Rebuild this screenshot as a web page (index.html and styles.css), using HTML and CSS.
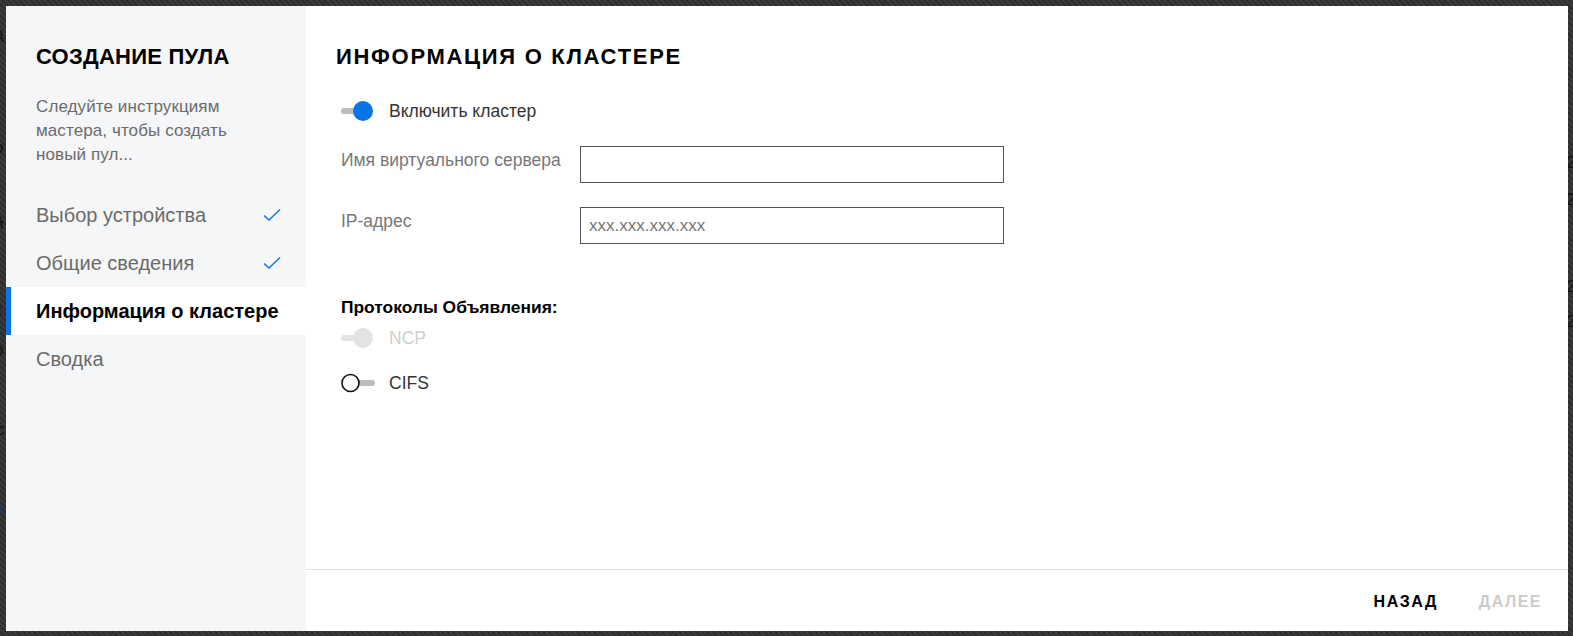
FILE: index.html
```html
<!DOCTYPE html>
<html lang="ru">
<head>
<meta charset="utf-8">
<title>Создание пула</title>
<link rel="stylesheet" href="styles.css">
</head>
<body>
<div class="backdrop">
  <span class="bgtxt" style="left:-6px;top:24px">ц</span>
  <span class="bgtxt" style="left:-6px;top:138px">о</span>
  <span class="bgtxt" style="left:-6px;top:214px">й</span>
  <span class="bgtxt" style="left:-6px;top:300px">к</span>
  <span class="bgtxt" style="left:-6px;top:340px">р</span>
  <span class="bgtxt" style="left:-4px;top:420px">с</span>
  <span class="bgtxt link" style="left:-4px;top:498px">с</span>
  <span class="bgtxt" style="left:1566px;top:153px">2</span>
  <span class="bgtxt" style="left:1566px;top:190px">2</span>
  <span class="bgtxt" style="left:1566px;top:277px">2</span>
  <span class="bgtxt" style="left:1566px;top:312px">2</span>
</div>

<div class="dialog">
  <aside class="sidebar">
    <h1 class="side-title">СОЗДАНИЕ ПУЛА</h1>
    <p class="side-desc">Следуйте инструкциям<br>мастера, чтобы создать<br>новый пул...</p>
    <ul class="steps">
      <li class="step done">
        <span>Выбор устройства</span>
        <svg class="check" width="18" height="14" viewBox="0 0 18 14"><path d="M1 7.5 L6 12 L17 1.5" fill="none" stroke="#1a73e8" stroke-width="1.6"/></svg>
      </li>
      <li class="step done">
        <span>Общие сведения</span>
        <svg class="check" width="18" height="14" viewBox="0 0 18 14"><path d="M1 7.5 L6 12 L17 1.5" fill="none" stroke="#1a73e8" stroke-width="1.6"/></svg>
      </li>
      <li class="step active"><span>Информация о кластере</span></li>
      <li class="step"><span>Сводка</span></li>
    </ul>
  </aside>

  <section class="main">
    <div class="content">
      <h2 class="main-title">ИНФОРМАЦИЯ О КЛАСТЕРЕ</h2>
      <div class="form">
        <div class="toggle-row top">
          <svg class="toggle" width="36" height="24" viewBox="0 0 36 24"><rect x="0" y="9" width="28" height="6" rx="3" fill="#bdbdbd"/><circle cx="22" cy="12" r="10" fill="#0a73e8"/></svg>
          <span class="toggle-label">Включить кластер</span>
        </div>

        <div class="field first">
          <span class="field-label">Имя виртуального сервера</span>
          <input class="field-input" type="text">
        </div>
        <div class="field">
          <span class="field-label">IP-адрес</span>
          <input class="field-input" type="text" placeholder="xxx.xxx.xxx.xxx">
        </div>

        <div class="protocols-title">Протоколы Объявления:</div>
        <div class="toggle-row ncp">
          <svg class="toggle" width="36" height="24" viewBox="0 0 36 24"><rect x="0" y="9" width="28" height="6" rx="3" fill="#e3e3e3"/><circle cx="22" cy="12" r="10" fill="#e3e3e3"/></svg>
          <span class="toggle-label disabled">NCP</span>
        </div>
        <div class="toggle-row cifs">
          <svg class="toggle" width="36" height="24" viewBox="0 0 36 24"><rect x="8" y="9" width="26" height="6" rx="3" fill="#bdbdbd"/><circle cx="9.5" cy="12" r="8.5" fill="#fff" stroke="#111" stroke-width="1.6"/></svg>
          <span class="toggle-label">CIFS</span>
        </div>
      </div>
    </div>
    <footer class="footer">
      <button class="btn">НАЗАД</button>
      <button class="btn disabled">ДАЛЕЕ</button>
    </footer>
  </section>
</div>
</body>
</html>
```

FILE: styles.css
```css
* { box-sizing: border-box; }

html, body {
  margin: 0;
  padding: 0;
  width: 1573px;
  height: 636px;
  overflow: hidden;
}

body {
  font-family: "Liberation Sans", Arial, sans-serif;
  background-color: #353535;
  background-image: repeating-linear-gradient(45deg, #3b3b3b 0 2px, #2e2e2e 2px 4px);
  position: relative;
}

.backdrop {
  position: absolute;
  inset: 0;
}

.bgtxt {
  position: absolute;
  font-size: 17px;
  line-height: 20px;
  color: #111;
}
.bgtxt.link { color: #0b3d7a; }

.dialog {
  position: absolute;
  left: 6px;
  top: 6px;
  width: 1562px;
  height: 625px;
  display: flex;
  background: #fff;
}

/* Sidebar */
.sidebar {
  width: 300px;
  flex: none;
  background: #f5f6f8;
  padding-top: 38px;
}

.side-title {
  margin: 0;
  padding: 0 30px;
  font-size: 22px;
  line-height: 26px;
  font-weight: 700;
  letter-spacing: 0.25px;
  color: #000;
}

.side-desc {
  margin: 25px 0 0;
  padding: 0 30px;
  font-size: 17px;
  line-height: 24px;
  letter-spacing: 0.1px;
  color: #6b6b6b;
}

.steps {
  list-style: none;
  margin: 24px 0 0;
  padding: 0;
}

.step {
  height: 48px;
  display: flex;
  align-items: center;
  justify-content: space-between;
  padding: 0 25px 0 30px;
  font-size: 20px;
  color: #6b6b6b;
}

.step .check { flex: none; margin-top: -1px; }

.step.active {
  background: #fff;
  color: #000;
  font-weight: 700;
  box-shadow: inset 5px 0 0 #0a73e8;
}

/* Main */
.main {
  flex: 1;
  display: flex;
  flex-direction: column;
}

.content {
  flex: 1;
  padding: 38px 30px 0;
}

.main-title {
  margin: 0;
  font-size: 22px;
  line-height: 26px;
  font-weight: 700;
  letter-spacing: 1.7px;
  color: #000;
}

.form {
  padding-left: 5px;
}

.toggle-row {
  display: flex;
  align-items: center;
  height: 24px;
  gap: 12px;
}
.toggle-row.top { margin-top: 29px; }

.toggle { flex: none; }

.toggle-label {
  font-size: 17.5px;
  color: #333;
}
.toggle-label.disabled { color: #cfcfcf; }

.field {
  display: flex;
  align-items: flex-start;
  margin-top: 24px;
}
.field.first { margin-top: 23px; }

.field-label {
  width: 239px;
  flex: none;
  padding-top: 4px;
  font-size: 17.5px;
  line-height: 20px;
  color: #777;
}

.field-input {
  width: 424px;
  height: 37px;
  margin: 0;
  border: 1px solid #555;
  border-radius: 0;
  padding: 0 8px;
  font-family: "Liberation Sans", Arial, sans-serif;
  font-size: 17px;
  color: #333;
  background: #fff;
  outline: none;
}
.field-input::placeholder { color: #777; }

.protocols-title {
  margin-top: 53px;
  font-size: 17.4px;
  line-height: 20px;
  font-weight: 700;
  color: #000;
}

.toggle-row.ncp { margin-top: 9px; }
.toggle-row.cifs { margin-top: 21px; }

/* Footer */
.footer {
  height: 62px;
  flex: none;
  border-top: 1px solid #dedede;
  display: flex;
  align-items: center;
  justify-content: flex-end;
  gap: 41px;
  padding: 2px 26px 0 0;
}

.btn {
  border: 0;
  background: none;
  padding: 0;
  font-family: "Liberation Sans", Arial, sans-serif;
  font-size: 16px;
  font-weight: 700;
  letter-spacing: 1.5px;
  color: #000;
  cursor: pointer;
}
.btn.disabled { color: #cccccc; }
```
